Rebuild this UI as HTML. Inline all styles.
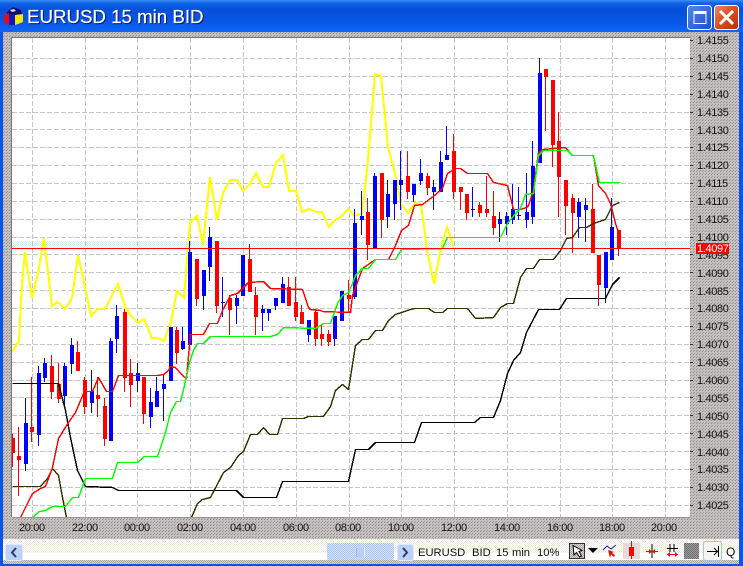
<!DOCTYPE html>
<html><head><meta charset="utf-8"><title>EURUSD 15 min BID</title>
<style>html,body{margin:0;padding:0;background:#0a55e8;overflow:hidden}svg{display:block}text{font-family:"Liberation Sans",sans-serif}</style></head>
<body>
<svg xmlns="http://www.w3.org/2000/svg" width="743" height="566" viewBox="0 0 743 566">
<defs>
<linearGradient id="tb" x1="0" y1="0" x2="0" y2="1"><stop offset="0" stop-color="#3c8cf4"/><stop offset=".1" stop-color="#0f62e6"/><stop offset=".3" stop-color="#0450d8"/><stop offset=".75" stop-color="#0a58ea"/><stop offset="1" stop-color="#1066f6"/></linearGradient>
<linearGradient id="mx" x1="0" y1="0" x2="1" y2="1"><stop offset="0" stop-color="#5a86e8"/><stop offset="1" stop-color="#1a4ed0"/></linearGradient>
<linearGradient id="cl" x1="0" y1="0" x2="1" y2="1"><stop offset="0" stop-color="#e88a68"/><stop offset=".5" stop-color="#dc4a20"/><stop offset="1" stop-color="#b83010"/></linearGradient>
<pattern id="gr" width="3" height="3" patternUnits="userSpaceOnUse"><rect width="3" height="3" fill="#c4c0c0"/><rect width="1" height="1" fill="#908c8c"/><rect x="1" y="2" width="1" height="1" fill="#a09c9c"/></pattern>
<pattern id="cy" width="2" height="2" patternUnits="userSpaceOnUse"><rect width="2" height="2" fill="#fff"/><rect width="1" height="1" fill="#c8f4f4"/><rect x="1" y="1" width="1" height="1" fill="#c8f4f4"/></pattern>
<pattern id="cr" width="2" height="2" patternUnits="userSpaceOnUse"><rect width="2" height="2" fill="#fff"/><rect width="1" height="1" fill="#f4eeda"/><rect x="1" y="1" width="1" height="1" fill="#e8e8f4"/></pattern>
<pattern id="tg" width="2" height="2" patternUnits="userSpaceOnUse"><rect width="2" height="2" fill="#d8d4d0"/><rect width="1" height="1" fill="#a8a4a0"/><rect x="1" y="1" width="1" height="1" fill="#a8a4a0"/></pattern>
<pattern id="dk" width="2" height="2" patternUnits="userSpaceOnUse"><rect width="2" height="2" fill="#9a9a9a"/><rect width="1" height="1" fill="#707070"/><rect x="1" y="1" width="1" height="1" fill="#707070"/></pattern>
<pattern id="sb" width="2" height="2" patternUnits="userSpaceOnUse"><rect width="2" height="2" fill="#d8e4fc"/><rect width="1" height="1" fill="#a8c4f8"/><rect x="1" y="1" width="1" height="1" fill="#a8c4f8"/></pattern>
<clipPath id="ch"><rect x="12" y="38" width="678" height="479"/></clipPath>
</defs>

<!-- frame -->
<rect width="743" height="566" fill="#0a55e8"/>
<rect x="0" y="0" width="743" height="32" fill="url(#tb)"/>
<rect x="3" y="32" width="736" height="507" fill="url(#gr)"/>
<rect x="3" y="539" width="736" height="25" fill="url(#cr)"/>
<rect x="3" y="553" width="736" height="7" fill="#fff"/>
<rect x="3" y="560" width="736" height="4" fill="url(#tg)"/>

<!-- title -->
<polygon points="7,12 13,7 21,10 22,15 14,17 7,15" fill="#0c0c70"/>
<polygon points="10,10 14,9 16,11 12,12" fill="#d8d8e8"/>
<polygon points="4,15 9,13 9,25 5,23 4,20" fill="#ee0a0a"/>
<polygon points="9,14 15,15 15,25 9,25" fill="#1414c8"/>
<polygon points="15,15 23,14 23,22 18,24 15,25" fill="#f4e800"/>
<text x="28" y="24" font-size="18.7" fill="#001870" stroke="#001870" stroke-width=".3">EURUSD 15 min BID</text>
<text x="27" y="23" font-size="18.7" fill="#fff" stroke="#fff" stroke-width=".2">EURUSD 15 min BID</text>
<rect x="687.5" y="5.5" width="24" height="24" rx="3" fill="url(#mx)" stroke="#fff"/>
<rect x="694" y="11.5" width="12" height="12" fill="none" stroke="#fff"/>
<rect x="693.5" y="11" width="13" height="3" fill="#fff"/>
<rect x="714.5" y="5.5" width="24" height="24" rx="3" fill="url(#cl)" stroke="#fff"/>
<path d="M720 11L733 24M733 11L720 24" stroke="#fff" stroke-width="3" fill="none"/>

<!-- chart -->
<rect x="12" y="38" width="678" height="479" fill="#fff"/>
<rect x="12" y="241" width="678" height="7" fill="url(#cy)"/>
<g stroke="#c6c6c6" stroke-width="1" stroke-dasharray="5 2" fill="none" shape-rendering="crispEdges">
<path d="M12 58.5H690M12 76.5H690M12 94.5H690M12 112.5H690M12 129.5H690M12 147.5H690M12 165.5H690M12 183.5H690M12 201.5H690M12 219.5H690"/>
<path d="M12 237.5H690M12 254.5H690M12 272.5H690M12 290.5H690M12 308.5H690M12 326.5H690M12 344.5H690M12 362.5H690M12 380.5H690M12 397.5H690M12 415.5H690M12 433.5H690M12 451.5H690M12 469.5H690M12 487.5H690M12 505.5H690"/>
<path d="M32.5 38V517M85.5 38V517M137.5 38V517M190.5 38V517M243.5 38V517M296.5 38V517M349.5 38V517M401.5 38V517M454.5 38V517M507.5 38V517M560.5 38V517M612.5 38V517M665.5 38V517"/>
</g>
<path d="M11.5 517V37.5H690.5" stroke="#777" fill="none" shape-rendering="crispEdges"/>
<path d="M12 517.5H690" stroke="#999" fill="none" shape-rendering="crispEdges"/>

<g clip-path="url(#ch)">
<!-- yellow -->
<polyline shape-rendering="crispEdges" fill="none" stroke="#ffff00" stroke-width="2.1" points="12,352 19,341 22,283 25,252 32,298 38,273 44,238 52,306 58,302 65,309 72,298 78,255 85,287 91,316 98,309 105,309 118,284 125,306 131,316 138,323 144,319 152,338 158,338 164,341 171,322 177,291 184,298 190,223 197,216 203,245 210,177 217,220 223,193 230,180 237,180 243,191 250,184 256,173 263,187 269,187 276,163 283,155 289,191 296,191 302,212 309,209 316,212 322,212 329,227 335,220 342,216 348,209 355,216 362,213 368,160 375,74 381,76 388,147 395,173 401,204 408,213 415,203 421,204 427,250 434,284 441,248 447,227 454,248"/>
<!-- candles -->
<path fill="#ff0000" d="M12 434h1V467h-1zM11 438h4V453h-4zM18 427h1V496h-1zM17 456h4V460h-4zM31 377h1V442h-1zM30 427h4V432h-4zM51 355h1V399h-1zM50 366h4V392h-4zM58 363h1V403h-1zM57 384h4V399h-4zM77 341h1V371h-1zM76 352h4V371h-4zM84 377h1V414h-1zM83 380h4V407h-4zM97 377h1V417h-1zM96 395h4V399h-4zM104 398h1V446h-1zM103 406h4V439h-4zM124 309h1V392h-1zM123 312h4V378h-4zM130 359h1V407h-1zM129 373h4V385h-4zM143 377h1V424h-1zM142 377h4V414h-4zM176 327h1V364h-1zM175 330h4V353h-4zM196 259h1V306h-1zM195 259h4V299h-4zM216 241h1V313h-1zM215 241h4V306h-4zM229 295h1V335h-1zM228 298h4V310h-4zM249 244h1V292h-1zM248 259h4V292h-4zM255 287h1V335h-1zM254 295h4V317h-4zM288 277h1V306h-1zM287 287h4V306h-4zM295 277h1V321h-1zM294 302h4V317h-4zM301 305h1V324h-1zM300 312h4V324h-4zM315 309h1V346h-1zM314 312h4V339h-4zM321 324h1V346h-1zM320 334h4V339h-4zM328 330h1V346h-1zM327 334h4V342h-4zM348 280h1V312h-1zM347 295h4V299h-4zM367 198h1V260h-1zM366 212h4V245h-4zM381 173h1V238h-1zM380 173h4V220h-4zM407 151h1V199h-1zM406 176h4V192h-4zM427 173h1V195h-1zM426 176h4V188h-4zM453 134h1V199h-1zM452 151h4V192h-4zM460 187h1V210h-1zM459 187h4V192h-4zM466 194h1V220h-1zM465 194h4V213h-4zM479 202h1V217h-1zM478 205h4V213h-4zM486 176h1V217h-1zM485 209h4V213h-4zM493 191h1V235h-1zM492 216h4V228h-4zM545 69h1V131h-1zM544 69h4V77h-4zM552 80h1V167h-1zM551 80h4V145h-4zM558 112h1V217h-1zM557 141h4V177h-4zM565 180h1V235h-1zM564 180h4V206h-4zM572 194h1V253h-1zM571 198h4V213h-4zM592 184h1V253h-1zM591 209h4V253h-4zM598 255h1V306h-1zM597 255h4V285h-4zM618 230h1V256h-1zM617 230h4V249h-4z"/>
<path fill="#0000ff" d="M25 398h1V471h-1zM24 423h4V464h-4zM38 366h1V446h-1zM37 373h4V435h-4zM44 358h1V382h-1zM43 363h4V378h-4zM64 363h1V406h-1zM63 366h4V396h-4zM71 338h1V374h-1zM70 345h4V364h-4zM91 370h1V413h-1zM90 391h4V403h-4zM110 338h1V441h-1zM109 341h4V441h-4zM116 305h1V353h-1zM115 316h4V339h-4zM137 363h1V392h-1zM136 373h4V381h-4zM150 388h1V428h-1zM149 402h4V417h-4zM156 377h1V407h-1zM155 391h4V407h-4zM163 374h1V421h-1zM162 384h4V389h-4zM170 327h1V381h-1zM169 327h4V381h-4zM182 327h1V350h-1zM181 341h4V349h-4zM189 241h1V345h-1zM188 252h4V345h-4zM203 270h1V310h-1zM202 270h4V296h-4zM209 227h1V281h-1zM208 237h4V267h-4zM222 277h1V317h-1zM221 302h4V303h-4zM236 295h1V324h-1zM235 298h4V306h-4zM242 255h1V296h-1zM241 255h4V296h-4zM262 305h1V331h-1zM261 309h4V313h-4zM268 309h1V321h-1zM267 309h4V313h-4zM275 298h1V310h-1zM274 298h4V306h-4zM282 277h1V303h-1zM281 284h4V303h-4zM308 320h1V342h-1zM307 320h4V335h-4zM334 316h1V346h-1zM333 316h4V339h-4zM341 291h1V321h-1zM340 291h4V321h-4zM354 209h1V299h-1zM353 223h4V297h-4zM361 191h1V235h-1zM360 216h4V220h-4zM374 173h1V248h-1zM373 176h4V248h-4zM387 180h1V228h-1zM386 194h4V217h-4zM394 180h1V220h-1zM393 180h4V204h-4zM400 151h1V210h-1zM399 180h4V185h-4zM413 184h1V202h-1zM412 184h4V195h-4zM420 159h1V185h-1zM419 173h4V181h-4zM433 180h1V210h-1zM432 187h4V192h-4zM440 151h1V192h-1zM439 162h4V192h-4zM446 126h1V160h-1zM445 155h4V160h-4zM472 187h1V217h-1zM471 209h4V210h-4zM499 212h1V242h-1zM498 219h4V224h-4zM506 212h1V235h-1zM505 216h4V224h-4zM512 184h1V224h-1zM511 209h4V220h-4zM518 187h1V220h-1zM517 215h4V216h-4zM526 173h1V228h-1zM525 212h4V220h-4zM532 141h1V224h-1zM531 166h4V217h-4zM539 58h1V163h-1zM538 73h4V163h-4zM578 198h1V238h-1zM577 202h4V217h-4zM585 198h1V242h-1zM584 205h4V210h-4zM605 252h1V303h-1zM604 252h4V288h-4zM611 198h1V260h-1zM610 227h4V260h-4z"/>
<g transform="translate(.5 .5)" fill="none" stroke-width="1.45" shape-rendering="crispEdges" stroke-linejoin="round">
<!-- black / olive -->
<polyline stroke="#000" points="12,383 58,383 65,410 70,437 77,470 82,480 85,486 112,487 118,490 236,490 243,497 276,497 282,481 348,481 355,449 368,449 375,442 414,442 421,422 474,422 480,417 493,417 500,400 507,373 513,360 520,352 526,332 538,309 559,309 566,298 605,298 612,284 619,277"/>
<polyline stroke="#333300" points="12,486 40,486 47,478 52,468 58,475 62,497 66,517"/>
<polyline stroke="#333300" points="191,517 197,503 202,499 210,497 223,472 230,467 238,455 243,451 250,434 257,434 263,427 269,434 277,434 282,418 303,418 308,416 323,416 330,406 335,390 342,384 348,389 355,345 362,339 368,339 375,330 382,330 388,320 395,314 410,309 414,308 428,308 434,312 442,312 447,308 467,308 475,318 493,317 500,307 507,303 513,303 520,277 526,268 533,268 539,259 553,259 560,250 566,238 572,237 579,227 586,227 593,223 605,219 612,205 619,202"/>
<!-- red -->
<polyline stroke="#ff0000" points="20,517 32,493 40,488 45,486 52,467 58,438 68,422 75,412 83,393 85,391 92,391 98,377 106,391 112,391 118,375 157,375 163,374 168,370 170,366 175,367 182,375 186,378 189,345 190,334 203,334 209,323 217,323 222,310 230,295 237,293 248,282 263,281 270,288 302,289 308,307 310,309 320,310 322,311 350,312 352,295 362,268 375,259 388,259 395,245 401,230 408,225 414,205 422,204 434,195 442,188 447,173 455,168 460,168 467,173 487,173 493,182 507,185 510,197 513,209 520,209 526,207 528,205 533,190 538,152 543,149 565,147 572,155 593,155 598,185 605,193 610,203 615,223 618,232"/>
<!-- green -->
<polyline stroke="#00ff00" points="32,517 39,511 45,510 52,506 65,506 72,497 78,497 85,478 112,478 117,462 137,462 144,456 157,456 165,432 170,412 176,401 180,401 184,385 189,362 193,350 197,343 203,343 210,336 270,336 277,334 283,327 315,328 323,323 330,323 337,303 342,295 348,292 352,283 355,275 362,268 368,268 375,259 395,259 401,249 442,248 447,237 500,237 507,223 515,213 520,208 525,194 533,193 538,155 543,150 567,150 572,155 593,155 599,182 620,182"/>
</g>
<!-- price line -->
<rect x="12" y="248" width="678" height="1" fill="#ff0000"/>
</g>

<!-- axis ticks -->
<path stroke="#333" fill="none" shape-rendering="crispEdges" d="M690 40.5h3M690 58.5h3M690 76.5h3M690 94.5h3M690 112.5h3M690 129.5h3M690 147.5h3M690 165.5h3M690 183.5h3M690 201.5h3M690 219.5h3M690 237.5h3M690 254.5h3M690 272.5h3M690 290.5h3M690 308.5h3M690 326.5h3M690 344.5h3M690 362.5h3M690 380.5h3M690 397.5h3M690 415.5h3M690 433.5h3M690 451.5h3M690 469.5h3M690 487.5h3M690 505.5h3"/>

<g font-size="11" letter-spacing="-.35" fill="#111">
<text x="697" y="44">1.4155</text><text x="697" y="62">1.4150</text><text x="697" y="80">1.4145</text><text x="697" y="98">1.4140</text><text x="697" y="116">1.4135</text><text x="697" y="134">1.4130</text><text x="697" y="151">1.4125</text><text x="697" y="169">1.4120</text><text x="697" y="187">1.4115</text><text x="697" y="205">1.4110</text><text x="697" y="223">1.4105</text><text x="697" y="241">1.4100</text><text x="697" y="259">1.4095</text><text x="697" y="277">1.4090</text><text x="697" y="295">1.4085</text><text x="697" y="312">1.4080</text><text x="697" y="330">1.4075</text><text x="697" y="348">1.4070</text><text x="697" y="366">1.4065</text><text x="697" y="384">1.4060</text><text x="697" y="402">1.4055</text><text x="697" y="420">1.4050</text><text x="697" y="438">1.4045</text><text x="697" y="456">1.4040</text><text x="697" y="473">1.4035</text><text x="697" y="491">1.4030</text><text x="697" y="509">1.4025</text>
<text x="19" y="531">20:00</text><text x="72" y="531">22:00</text><text x="124" y="531">00:00</text><text x="177" y="531">02:00</text><text x="230" y="531">04:00</text><text x="283" y="531">06:00</text><text x="335" y="531">08:00</text><text x="388" y="531">10:00</text><text x="441" y="531">12:00</text><text x="494" y="531">14:00</text><text x="547" y="531">16:00</text><text x="599" y="531">18:00</text><text x="651" y="531">20:00</text>
</g>
<rect x="696" y="243" width="33" height="11" fill="#ff0000"/>
<text x="697" y="252" font-size="11" letter-spacing="-.35" fill="#fff">1.4097</text>

<!-- toolbar -->
<rect x="5.5" y="544.5" width="17" height="16" rx="2" fill="#bcd0f8" stroke="#e0e8fc"/>
<path d="M16 548L12 552.5L16 557" stroke="#2a3c70" stroke-width="2" fill="none"/>
<rect x="327" y="543" width="67" height="17" rx="2" fill="url(#sb)"/>
<path d="M358 548v9M360 548v9M362 548v9M364 548v9" stroke="#fff"/>
<path d="M357 548v9M359 548v9M361 548v9M363 548v9" stroke="#7f9fe0"/>
<rect x="397.5" y="544.5" width="16" height="16" rx="2" fill="#bcd0f8" stroke="#e0e8fc"/>
<path d="M403 548L407 552.5L403 557" stroke="#2a3c70" stroke-width="2" fill="none"/>
<g font-size="11.2" fill="#111">
<text x="418" y="556">EURUSD</text><text x="472" y="556">BID</text><text x="496" y="556">15</text><text x="512" y="556">min</text><text x="537" y="556">10%</text>
<text x="726" y="556" font-size="12">Q</text>
</g>
<rect x="569.5" y="543.5" width="15" height="15" fill="url(#tg)" stroke="#333"/>
<path d="M573 545.5L574 555L576.5 552.5L579.5 557L581.5 556L579 551.5L582 550.5Z" fill="#fff" stroke="#000"/>
<polygon points="588,548 598,548 593,553" fill="#000"/>
<path d="M603 550L607 546L611 549L616 545" stroke="#1414e0" fill="none"/>
<path d="M608 550L610 558L611 554.5L614 557L615 555L612 553L614 552Z" fill="#e01010"/>
<rect x="623" y="543" width="17" height="16" fill="#e4dcd8"/>
<rect x="631" y="541" width="1" height="18" fill="#ff0000"/>
<rect x="629" y="547" width="5" height="9" fill="#ff0000"/>
<path d="M652 544v14" stroke="#000" fill="none"/>
<path d="M646 551.5h12" stroke="#e01010" fill="none"/>
<path d="M649 549l3 2.5l-3 2.5zM655 549l-3 2.5l3 2.5z" fill="#e01010"/>
<path d="M670 544v8M674 544v8M667 548.5h11" stroke="#000" fill="none"/>
<path d="M667 554.5h11" stroke="#e01010" fill="none"/>
<path d="M670 552l-3 2.5l3 2.5zM675 552l3 2.5l-3 2.5z" fill="#e01010"/>
<rect x="684" y="543" width="15" height="16" fill="url(#dk)"/>
<rect x="703.5" y="541.5" width="18" height="19" rx="2" fill="#f4f4f0" stroke="#a8c8d8"/>
<path d="M707 551.5h10M714 548l3.5 3.5l-3.5 3.5M718.5 546v11" stroke="#000" fill="none"/>
</svg>
</body></html>
